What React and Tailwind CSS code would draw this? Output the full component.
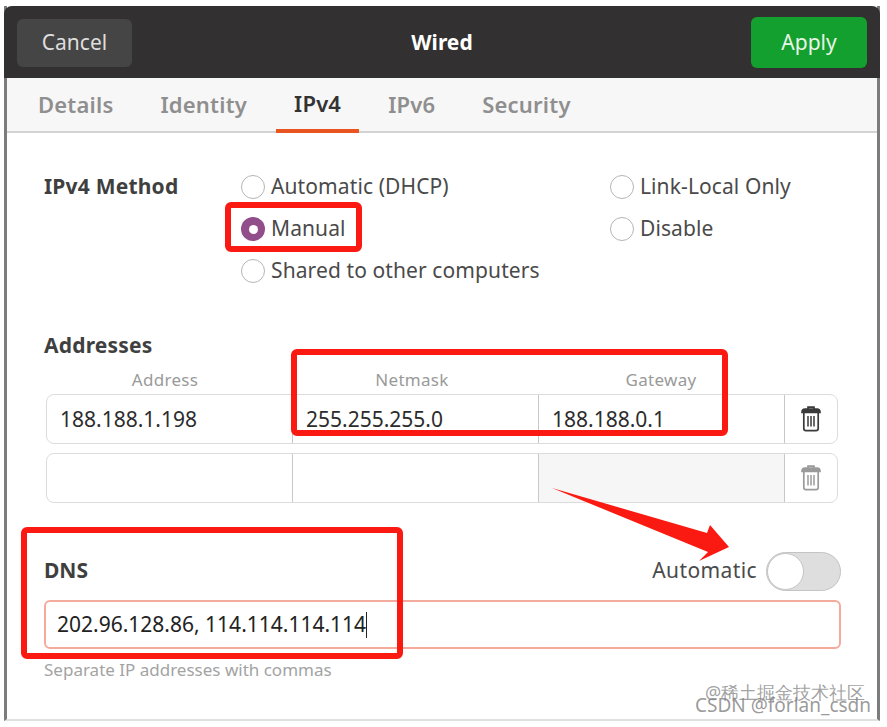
import React from "react";

function Trash({ dim }) {
  const c = dim ? "#9a9a9a" : "#3a3a3a";
  return (
    <svg width="20" height="26" viewBox="0 0 20 26" fill="none" stroke={c} strokeWidth="1.7">
      <path d="M7 3.2V1.2h6v2" />
      <path d="M1 6.2c0-2 1-3 3-3h12c2 0 3 1 3 3v.3H1z" fill={c} />
      <path d="M2.8 7v15.5c0 1.3.8 2.2 2.2 2.2h10c1.4 0 2.2-.9 2.2-2.2V7" />
      <path d="M7 10v10.5M10 10v10.5M13 10v10.5" strokeWidth="1.5" />
    </svg>
  );
}

function Radio({ label, checked }) {
  return (
    <div className="flex h-[42px] items-center">
      {checked ? (
        <span className="flex h-6 w-6 items-center justify-center rounded-full bg-[#924d8b]">
          <span className="h-[9px] w-[9px] rounded-full bg-white" />
        </span>
      ) : (
        <span className="h-6 w-6 rounded-full border border-[#b5b5b5] bg-white" />
      )}
      <span className="ml-[6px] text-[21px] tracking-[0.1px] text-[#4a4a4a]">{label}</span>
    </div>
  );
}

function Row({ values, dim, grey }) {
  return (
    <div className="flex h-[50px] rounded-lg border border-[#dcdcdc] bg-white">
      {values.map((v, i) => (
        <div
          key={i}
          className={`flex w-[246px] items-center border-r border-[#c8c8c8] pl-[13px] pt-[2px] text-[21px] text-[#2c2c2c] ${grey && i === 2 ? "bg-[#f6f6f6]" : ""}`}
        >
          {v}
        </div>
      ))}
      <div className="flex flex-1 items-center justify-center">
        <Trash dim={dim} />
      </div>
    </div>
  );
}

export default function App() {
  return (
    <div className="relative h-[727px] w-[887px] overflow-hidden bg-white pl-[4px] pr-[7px] pt-[6px] font-['Noto_Sans',sans-serif]">
      <div className="flex h-[715px] flex-col border-x-[3px] border-b-2 border-[#7c7c7c] border-b-[#e0e0e0] bg-white">
        <header className="-mx-[3px] flex h-[72px] items-center justify-between rounded-t-lg bg-[#323030] pl-[13px] pr-[13px] pt-[1px]">
          <div className="flex h-[48px] w-[115px] items-center justify-center rounded-md bg-[#454545] text-[21px] text-[#dedede]">Cancel</div>
          <div className="ml-[1px] text-[21px] font-bold text-white">Wired</div>
          <div className="flex h-[51px] w-[116px] items-center justify-center rounded-md bg-[#14a02e] text-[21px] text-[#e8f5e8]">Apply</div>
        </header>
        <nav className="flex h-[55px] items-stretch gap-[29px] border-b-2 border-[#d3d3d3] bg-[#f7f7f7] pl-[31px] text-[22px] font-semibold tracking-[0.2px] text-[#8f8f8f]">
          <span className="flex items-center">Details</span>
          <span className="flex items-center pl-[18px]">Identity</span>
          <span className="-mb-[2px] flex items-center border-b-4 border-[#e95420] px-[18px] text-[#333]">IPv4</span>
          <span className="flex items-center">IPv6</span>
          <span className="flex items-center pl-[18px]">Security</span>
        </nav>
        <main className="flex-1 pl-[37px] pr-[36px] pt-[33px]">
          <section className="flex">
            <div className="flex h-[42px] w-[197px] items-center text-[21px] font-bold tracking-[0.2px] text-[#3f3f3f]">IPv4 Method</div>
            <div className="w-[369px]">
              <Radio label="Automatic (DHCP)" />
              <Radio label="Manual" checked />
              <Radio label="Shared to other computers" />
            </div>
            <div>
              <Radio label="Link-Local Only" />
              <Radio label="Disable" />
            </div>
          </section>
          <h2 className="mt-[37px] text-[21px] font-bold leading-[32px] tracking-[0.2px] text-[#3f3f3f]">Addresses</h2>
          <div className="ml-[2px] w-[792px]">
            <div className="mb-[1px] mt-[6px] flex h-[26px] items-center text-[17px] tracking-[0.3px] text-[#9a9a9a]">
              <span className="w-[238px] text-center">Address</span>
              <span className="w-[256px] text-center">Netmask</span>
              <span className="w-[242px] text-center">Gateway</span>
            </div>
            <Row values={["188.188.1.198", "255.255.255.0", "188.188.0.1"]} />
            <div className="mt-[9px]">
              <Row values={["", "", ""]} dim grey />
            </div>
          </div>
          <div className="mt-[48px] flex h-[40px] items-center justify-between">
            <span className="text-[21px] font-bold text-[#3f3f3f]">DNS</span>
            <div className="flex items-center">
              <span className="mr-[9px] text-[21px] tracking-[0.4px] text-[#4a4a4a]">Automatic</span>
              <div className="flex h-[39px] w-[75px] rounded-full border border-[#c4c4c4] bg-[#dedede]">
                <div className="h-[37px] w-[37px] rounded-full border border-[#c4c4c4] bg-white" />
              </div>
            </div>
          </div>
          <div className="mt-[9px] flex h-[49px] w-[797px] items-center rounded-md border-2 border-[#f4ab9b] pl-[11px] text-[21px] text-[#222]">
            202.96.128.86, 114.114.114.114
            <span className="h-[26px] w-px bg-[#222]" />
          </div>
          <p className="mt-[8px] text-[17px] text-[#a3a3a3]">Separate IP addresses with commas</p>
        </main>
      </div>

      <div className="absolute left-[225px] top-[202px] h-[50px] w-[137px] rounded-md border-[6px] border-[#fb1a12]" />
      <div className="absolute left-[291px] top-[349px] h-[87px] w-[437px] rounded-md border-[6px] border-[#fb1a12]" />
      <div className="absolute left-[21px] top-[527px] h-[132px] w-[382px] rounded-md border-[6px] border-[#fb1a12]" />
      <svg className="absolute left-[545px] top-[482px]" width="195" height="85" viewBox="0 0 195 85">
        <path d="M7 6 L162 51 L165 43 L184 65 L154 79 L163 70 Z" fill="#fb1a12" />
      </svg>
      <div className="absolute left-[705px] top-[683px] text-[18px] leading-none text-[#8a8a8a]/80">@稀土掘金技术社区</div>
      <div className="absolute left-[695px] top-[696px] text-[19px] leading-none text-[#808080]/80">CSDN @forlan_csdn</div>
    </div>
  );
}
